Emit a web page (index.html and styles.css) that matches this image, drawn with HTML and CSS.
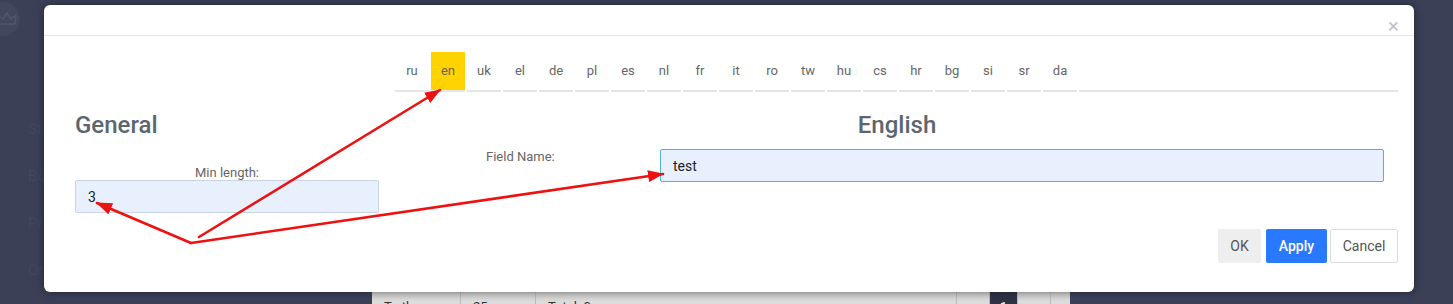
FILE: index.html
```html
<!DOCTYPE html>
<html lang="en">
<head>
    <meta charset="UTF-8">
    <meta name="viewport" content="width=device-width, initial-scale=1.0">
    <title>Field translations</title>
    <link rel="stylesheet" href="styles.css">
</head>
<body>
    <!-- Dimmed page behind the dialog -->
    <div class="app">
        <aside class="sidebar">
            <div class="avatar">
                <svg width="20" height="14" viewBox="0 0 20 14">
                    <path d="M2 12 L1 3 L6 7 L10 1 L14 7 L19 3 L18 12 Z" fill="none" stroke="#50556b" stroke-width="1.6" stroke-linejoin="round"/>
                </svg>
            </div>
            <ul class="menu">
                <li>Stats</li>
                <li>Bulk</li>
                <li>Prod</li>
                <li>Ord</li>
                <li>Que</li>
            </ul>
        </aside>
        <main class="main">
            <div class="pager">
                <span class="pager-cell pager-label">To the page:</span>
                <span class="pager-cell pager-size">25 <small>▾</small></span>
                <span class="pager-cell pager-total">Total: 0</span>
                <span class="pager-cell pager-nav">‹</span>
                <span class="pager-cell pager-current">1</span>
                <span class="pager-cell pager-nav">›</span>
            </div>
        </main>
    </div>

    <!-- Dialog -->
    <div class="modal">
        <div class="modal-header">
            <span class="close">×</span>
        </div>
        <div class="modal-body">
            <div class="lang-tabs">
                <span class="lang-tab">ru</span>
                <span class="lang-tab active">en</span>
                <span class="lang-tab">uk</span>
                <span class="lang-tab">el</span>
                <span class="lang-tab">de</span>
                <span class="lang-tab">pl</span>
                <span class="lang-tab">es</span>
                <span class="lang-tab">nl</span>
                <span class="lang-tab">fr</span>
                <span class="lang-tab">it</span>
                <span class="lang-tab">ro</span>
                <span class="lang-tab">tw</span>
                <span class="lang-tab">hu</span>
                <span class="lang-tab">cs</span>
                <span class="lang-tab">hr</span>
                <span class="lang-tab">bg</span>
                <span class="lang-tab">si</span>
                <span class="lang-tab">sr</span>
                <span class="lang-tab">da</span>
                <span class="lang-fill"></span>
            </div>

            <div class="columns">
                <div class="col-general">
                    <h2>General</h2>
                    <div class="general-field">
                        <label for="min-length">Min length:</label>
                        <input type="text" id="min-length" class="field-input" value="3">
                    </div>
                </div>
                <div class="col-lang">
                    <h2 class="lang-title">English</h2>
                    <div class="field-row">
                        <label for="field-name">Field Name:</label>
                        <input type="text" id="field-name" class="field-input focused" value="test">
                    </div>
                </div>
            </div>

            <div class="modal-footer">
                <button class="btn btn-ok">OK</button>
                <button class="btn btn-apply">Apply</button>
                <button class="btn btn-cancel">Cancel</button>
            </div>
        </div>
    </div>

    <!-- Red annotation arrows -->
    <svg class="annotations" width="1453" height="304" viewBox="0 0 1453 304">
        <defs>
            <marker id="head" markerUnits="userSpaceOnUse" markerWidth="16" markerHeight="12" refX="15" refY="6" orient="auto">
                <path d="M0 0 L16 6 L0 12 Z" fill="#ee1111"/>
            </marker>
        </defs>
        <g stroke="#ee1111" stroke-width="2.6" fill="none" stroke-linecap="round">
            <line x1="199" y1="237" x2="440" y2="90" marker-end="url(#head)"/>
            <line x1="191" y1="243" x2="97" y2="203" marker-end="url(#head)"/>
            <line x1="191" y1="243" x2="663" y2="174" marker-end="url(#head)"/>
        </g>
    </svg>
</body>
</html>
```

FILE: styles.css
```css
body {
    margin: 0;
    padding: 0;
    width: 1453px;
    height: 304px;
    overflow: hidden;
    background-color: #3b4057;
    font-family: Roboto, "Liberation Sans", Arial, sans-serif;
    position: relative;
}

/* Background page (already dimmed) */
.app {
    display: flex;
    height: 322px;
}

.sidebar {
    width: 44px;
    margin-right: 16px;
    flex-shrink: 0;
    overflow: hidden;
}

.avatar {
    width: 34px;
    height: 34px;
    margin: 2px 0 0 -14px;
    border-radius: 50%;
    background-color: #42475d;
    display: flex;
    align-items: center;
    justify-content: flex-end;
    padding-right: 3px;
    box-sizing: border-box;
}

.menu {
    list-style: none;
    margin: 0;
    padding: 84px 0 0 28px;
    color: #42475e;
    font-size: 15px;
}

.menu li {
    height: 47px;
    white-space: nowrap;
}

.main {
    flex: 1;
    display: flex;
    flex-direction: column;
}

.pager {
    margin-top: auto;
    margin-left: 312px;
    width: 698px;
    height: 30px;
    display: flex;
    background: linear-gradient(#c9c9c9, #dcdcdc 30%);
    color: #333;
    font-size: 13px;
}

.pager-cell {
    box-sizing: border-box;
    padding: 7px 12px 0;
    border-right: 1px solid #b9b9b9;
    white-space: nowrap;
}

.pager-label {
    width: 89px;
}

.pager-size {
    width: 75px;
}

.pager-total {
    width: 421px;
}

.pager-nav {
    width: 33px;
    color: #888;
}

.pager-current {
    width: 28px;
    padding-left: 10px;
    background-color: #2f3345;
    color: #fff;
}

/* Dialog */
.modal {
    position: absolute;
    left: 44px;
    top: 5px;
    width: 1370px;
    height: 287px;
    background-color: #fff;
    border-radius: 6px;
    box-shadow: 0 0 8px rgba(0, 0, 0, 0.45);
}

.modal-header {
    height: 30px;
    border-bottom: 1px solid #e6e6e6;
    display: flex;
    justify-content: flex-end;
    align-items: flex-end;
    padding: 0 15px 0 0;
}

.close {
    font-size: 21px;
    line-height: 18px;
    color: #c4c4c4;
    cursor: pointer;
}

.modal-body {
    padding: 16px 16px 29px;
}

/* Language tabs */
.lang-tabs {
    display: flex;
    margin-left: 335px;
}

.lang-tab {
    width: 34px;
    height: 38px;
    line-height: 38px;
    margin-right: 2px;
    text-align: center;
    font-size: 13px;
    color: #666;
    border-bottom: 2px solid #e4e6e8;
    cursor: pointer;
}

.lang-tab.active {
    background-color: #ffd300;
}

.lang-fill {
    flex: 1;
    border-bottom: 2px solid #e4e6e8;
}

/* Columns */
.columns {
    display: flex;
    gap: 31px;
    margin-top: 18px;
    padding-left: 15px;
}

.col-general {
    width: 304px;
}

.col-lang {
    width: 974px;
}

h2 {
    margin: 0;
    font-size: 24px;
    font-weight: 500;
    line-height: 30px;
    color: #5b6670;
}

.lang-title {
    text-align: center;
}

label {
    font-size: 13px;
    color: #666;
}

.general-field {
    margin-top: 25px;
}

.general-field label {
    display: block;
    text-align: center;
    line-height: 15px;
}

.field-input {
    width: 100%;
    height: 33px;
    box-sizing: border-box;
    padding: 0 12px;
    border: 1px solid #c9d4e2;
    border-radius: 2px;
    background-color: #e8f0fe;
    font-family: Roboto, "Liberation Sans", Arial, sans-serif;
    font-size: 14px;
    color: #222;
    outline: none;
}

.field-input.focused {
    border-color: #53b4c9;
}

.field-row {
    display: flex;
    margin-top: 9px;
}

.field-row label {
    width: 250px;
    flex-shrink: 0;
    padding-left: 76px;
    box-sizing: border-box;
    line-height: 16px;
}

/* Footer buttons */
.modal-footer {
    display: flex;
    justify-content: flex-end;
    margin-top: 16px;
}

.btn {
    height: 34px;
    border: none;
    border-radius: 2px;
    font-family: Roboto, "Liberation Sans", Arial, sans-serif;
    font-size: 14px;
    cursor: pointer;
    padding: 0;
}

.btn-ok {
    width: 43px;
    background-color: #eeeeee;
    color: #555;
}

.btn-apply {
    width: 61px;
    margin-left: 5px;
    background-color: #2979ff;
    color: #fff;
    font-weight: 500;
}

.btn-cancel {
    width: 68px;
    margin-left: 3px;
    background-color: #fff;
    border: 1px solid #dcdcdc;
    color: #555;
}

/* Annotation overlay */
.annotations {
    position: absolute;
    left: 0;
    top: 0;
    pointer-events: none;
}
```
